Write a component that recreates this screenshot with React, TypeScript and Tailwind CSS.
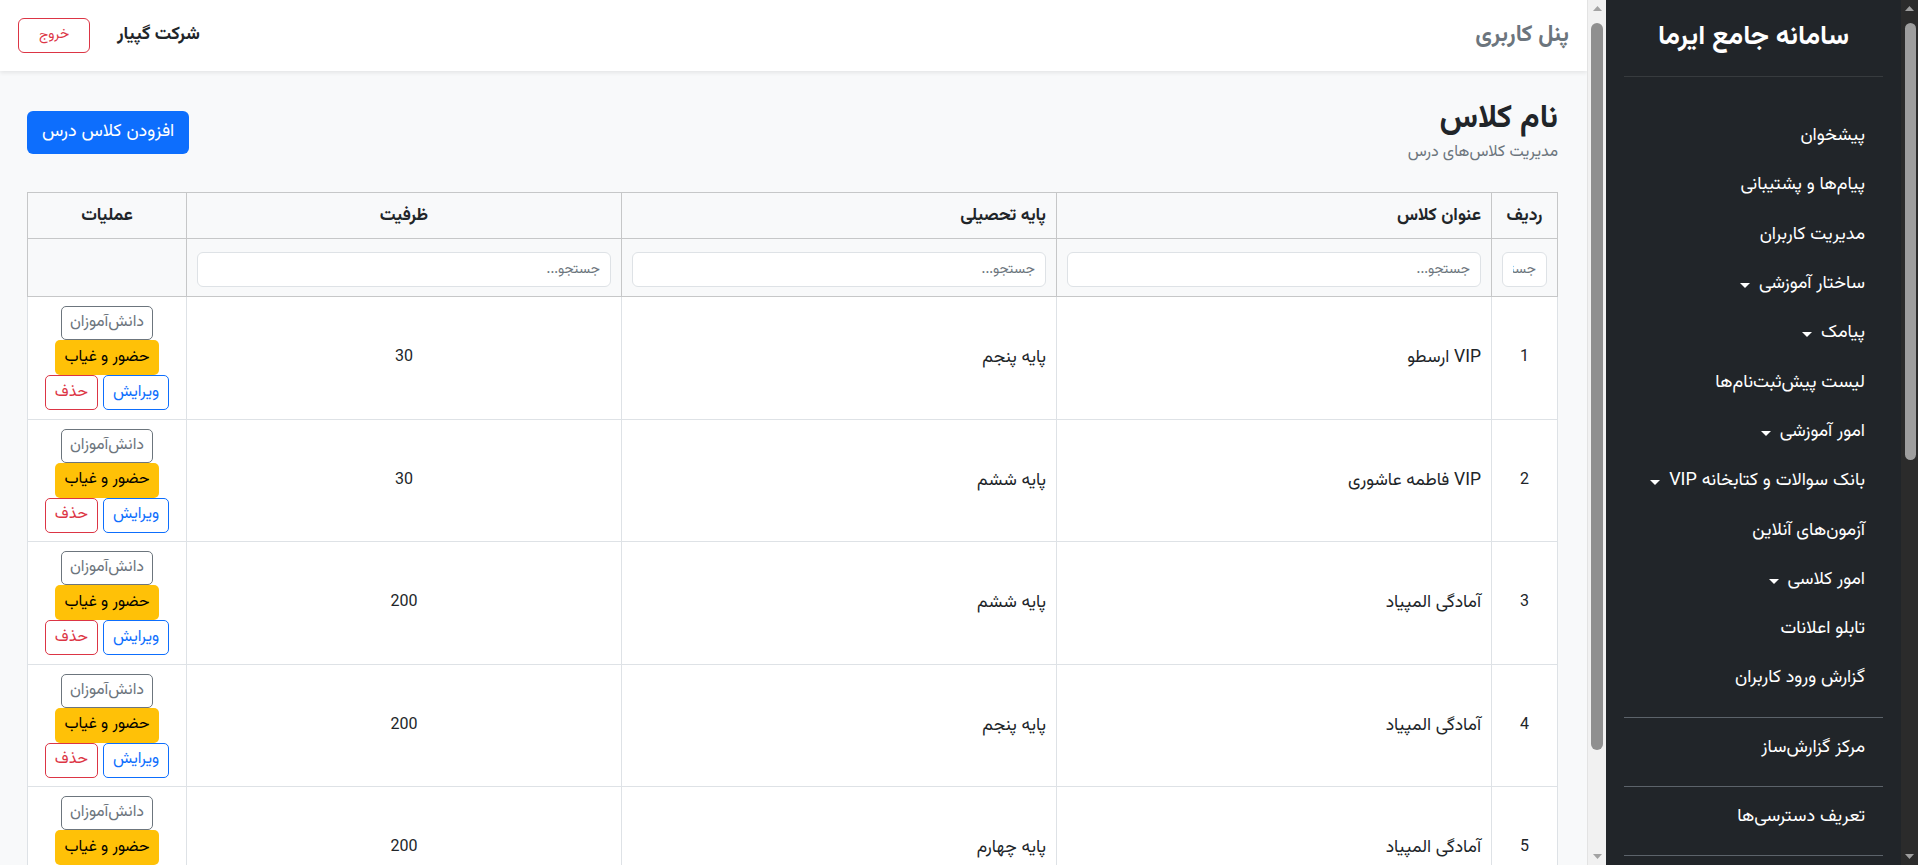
import React from "react";

type Row = { id: number; title: string; grade: string; capacity: number };

const rows: Row[] = [
  { id: 1, title: "VIP ارسطو", grade: "پایه پنجم", capacity: 30 },
  { id: 2, title: "VIP فاطمه عاشوری", grade: "پایه ششم", capacity: 30 },
  { id: 3, title: "آمادگی المپیاد", grade: "پایه ششم", capacity: 200 },
  { id: 4, title: "آمادگی المپیاد", grade: "پایه پنجم", capacity: 200 },
  { id: 5, title: "آمادگی المپیاد", grade: "پایه چهارم", capacity: 200 },
];

type MenuItem = { label: string; caret?: boolean };

const menu: MenuItem[] = [
  { label: "پیشخوان" },
  { label: "پیام‌ها و پشتیبانی" },
  { label: "مدیریت کاربران" },
  { label: "ساختار آموزشی", caret: true },
  { label: "پیامک", caret: true },
  { label: "لیست پیش‌ثبت‌نام‌ها" },
  { label: "امور آموزشی", caret: true },
  { label: "بانک سوالات و کتابخانه VIP", caret: true },
  { label: "آزمون‌های آنلاین" },
  { label: "امور کلاسی", caret: true },
  { label: "تابلو اعلانات" },
  { label: "گزارش ورود کاربران" },
];

const sections: string[] = [
  "مرکز گزارش‌ساز",
  "تعریف دسترسی‌ها",
  "تنظیمات سامانه",
  "پروفایل کاربری",
  "تغییر رمز عبور",
  "مدیریت مالی",
  "گزارش‌های مالی",
  "تنظیمات پیامک",
  "راهنمای سامانه",
  "پشتیبانی فنی",
  "درباره سامانه",
];

function Caret() {
  return (
    <span className="inline-block w-0 h-0 border-t-[5.5px] border-t-white border-x-[5px] border-x-transparent mt-[2px]" />
  );
}

function ArrowUp({ color }: { color: string }) {
  return (
    <svg width="9" height="5" viewBox="0 0 9 5">
      <path d="M4.5 0 L9 5 L0 5 Z" fill={color} />
    </svg>
  );
}

function ArrowDown({ color }: { color: string }) {
  return (
    <svg width="9" height="5" viewBox="0 0 9 5">
      <path d="M0 0 L9 0 L4.5 5 Z" fill={color} />
    </svg>
  );
}

/* Drawn scrollbar of the main column (light) */
function MainScrollbar() {
  return (
    <div className="w-[19px] h-full shrink-0 flex flex-col bg-[#f1f1f1] border-l border-[#e3e3e3]">
      <div className="h-[17px] flex items-center justify-center">
        <ArrowUp color="#a3a3a3" />
      </div>
      <div className="flex-1 px-[3px] pt-[6px]">
        <div className="h-[727px] rounded-full bg-[#8f8f8f]" />
      </div>
      <div className="h-[17px] flex items-center justify-center">
        <ArrowDown color="#a3a3a3" />
      </div>
    </div>
  );
}

/* Drawn scrollbar of the sidebar (dark) */
function SideScrollbar() {
  return (
    <div className="w-[17px] h-full shrink-0 flex flex-col bg-[#2b2b2b]">
      <div className="h-[17px] flex items-center justify-center">
        <ArrowUp color="#9e9e9e" />
      </div>
      <div className="flex-1 pl-[4px] pr-[2px] pt-[6px]">
        <div className="h-[437px] rounded-full bg-[#9e9e9e]" />
      </div>
      <div className="h-[17px] flex items-center justify-center">
        <ArrowDown color="#9e9e9e" />
      </div>
    </div>
  );
}

function FilterInput() {
  return (
    <input
      type="text"
      placeholder="جستجو..."
      className="w-full h-[35px] rounded-[6px] border border-[#dee2e6] bg-white px-[10px] text-[14px] text-[#212529] placeholder:text-[#6c757d] outline-none"
    />
  );
}

function Actions() {
  return (
    <div className="flex flex-col items-center">
      <button className="h-[34px] px-[8px] rounded-[5px] border border-[#6c757d] text-[#6c757d] text-[16px] bg-transparent">
        دانش‌آموزان
      </button>
      <button className="h-[35px] px-[9px] rounded-[5px] bg-[#ffc107] text-black text-[16px]">
        حضور و غیاب
      </button>
      <div className="flex gap-[5px]">
        <button className="h-[35px] px-[9px] rounded-[5px] border border-[#0d6efd] text-[#0d6efd] text-[16px]">
          ویرایش
        </button>
        <button className="h-[35px] px-[9px] rounded-[5px] border border-[#dc3545] text-[#dc3545] text-[16px]">
          حذف
        </button>
      </div>
    </div>
  );
}

export default function App() {
  return (
    <div className="flex h-screen w-full overflow-hidden [font-family:Vazirmatn,sans-serif]" dir="ltr">
      {/* Main column */}
      <div className="flex-1 min-w-0 h-full overflow-y-auto [scrollbar-width:none] bg-[#f8f9fa]">
        <div dir="rtl" className="min-h-full">
          <header className="h-[71px] bg-white shadow-[0_2px_4px_rgba(0,0,0,0.08)] flex items-center justify-between px-[18px]">
            <span className="text-[23px] font-bold text-[#6c757d]">پنل کاربری</span>
            <div className="flex items-center gap-[27px]">
              <span className="text-[18px] font-bold text-[#212529]">شرکت گپیار</span>
              <button className="w-[72px] h-[35px] rounded-[6px] border border-[#dc3545] text-[#dc3545] text-[14px] bg-white">
                خروج
              </button>
            </div>
          </header>

          <div className="pt-[29px] pb-[77px] pr-[29px] pl-[27px]">
            <div className="flex items-center justify-between mb-[27px]">
              <div className="flex flex-col">
                <h1 className="text-[32px] font-bold leading-[1.2] text-[#212529]">نام کلاس</h1>
                <p className="mt-[3px] text-[16px] leading-[24px] text-[#6c757d]">مدیریت کلاس‌های درس</p>
              </div>
              <button className="h-[43px] px-[15px] rounded-[6px] bg-[#0d6efd] text-white text-[18px]">
                افزودن کلاس درس
              </button>
            </div>

            <table className="w-full table-fixed border-collapse bg-white text-[17.5px] text-[#212529]">
              <colgroup>
                <col className="w-[66px]" />
                <col />
                <col />
                <col />
                <col className="w-[159px]" />
              </colgroup>
              <thead className="bg-[#f8f9fa]">
                <tr className="h-[46px]">
                  <th className="border border-[#c6c7c8] px-2 text-center font-bold">ردیف</th>
                  <th className="border border-[#c6c7c8] px-[10px] text-right font-bold">عنوان کلاس</th>
                  <th className="border border-[#c6c7c8] px-[10px] text-right font-bold">پایه تحصیلی</th>
                  <th className="border border-[#c6c7c8] px-2 text-center font-bold">ظرفیت</th>
                  <th className="border border-[#c6c7c8] px-2 text-center font-bold">عملیات</th>
                </tr>
                <tr className="h-[58px]">
                  <th className="border border-[#c6c7c8] px-[10px] pt-[4px] font-normal"><FilterInput /></th>
                  <th className="border border-[#c6c7c8] px-[10px] pt-[4px] font-normal"><FilterInput /></th>
                  <th className="border border-[#c6c7c8] px-[10px] pt-[4px] font-normal"><FilterInput /></th>
                  <th className="border border-[#c6c7c8] px-[10px] pt-[4px] font-normal"><FilterInput /></th>
                  <th className="border border-[#c6c7c8]" />
                </tr>
              </thead>
              <tbody>
                {rows.map((r) => (
                  <tr key={r.id}>
                    <td className="border border-[#dee2e6] px-2 text-center align-middle text-[16px]">{r.id}</td>
                    <td className="border border-[#dee2e6] px-[10px] text-right align-middle">{r.title}</td>
                    <td className="border border-[#dee2e6] px-[10px] text-right align-middle">{r.grade}</td>
                    <td className="border border-[#dee2e6] px-2 text-center align-middle text-[16px]">{r.capacity}</td>
                    <td className="border border-[#dee2e6] px-2 pt-[9px] pb-[8.5px] align-middle">
                      <Actions />
                    </td>
                  </tr>
                ))}
              </tbody>
            </table>
          </div>
        </div>
      </div>
      <MainScrollbar />

      {/* Sidebar */}
      <aside className="w-[295px] shrink-0 h-full overflow-y-auto [scrollbar-width:none] bg-[#212529]">
        <div dir="rtl" className="px-[18px] pb-[40px]">
          <div className="h-[77px] flex items-center justify-center border-b border-[#373b3e]">
            <span className="text-[27px] font-bold text-white">سامانه جامع ایرما</span>
          </div>
          <nav className="pt-[35px] pr-[18px]">
            {menu.map((m) => (
              <div key={m.label} className="h-[49.3px] flex items-center gap-[9px] text-[18px] text-white">
                <span>{m.label}</span>
                {m.caret && <Caret />}
              </div>
            ))}
          </nav>
          {sections.map((s) => (
            <div key={s}>
              <div className="mt-[13px] border-t border-[#5c636a]" />
              <div className="mt-[6px] h-[49.3px] flex items-center pr-[18px] text-[18px] text-white">{s}</div>
            </div>
          ))}
          <div className="mt-[13px] border-t border-[#5c636a]" />
        </div>
      </aside>
      <SideScrollbar />
    </div>
  );
}
